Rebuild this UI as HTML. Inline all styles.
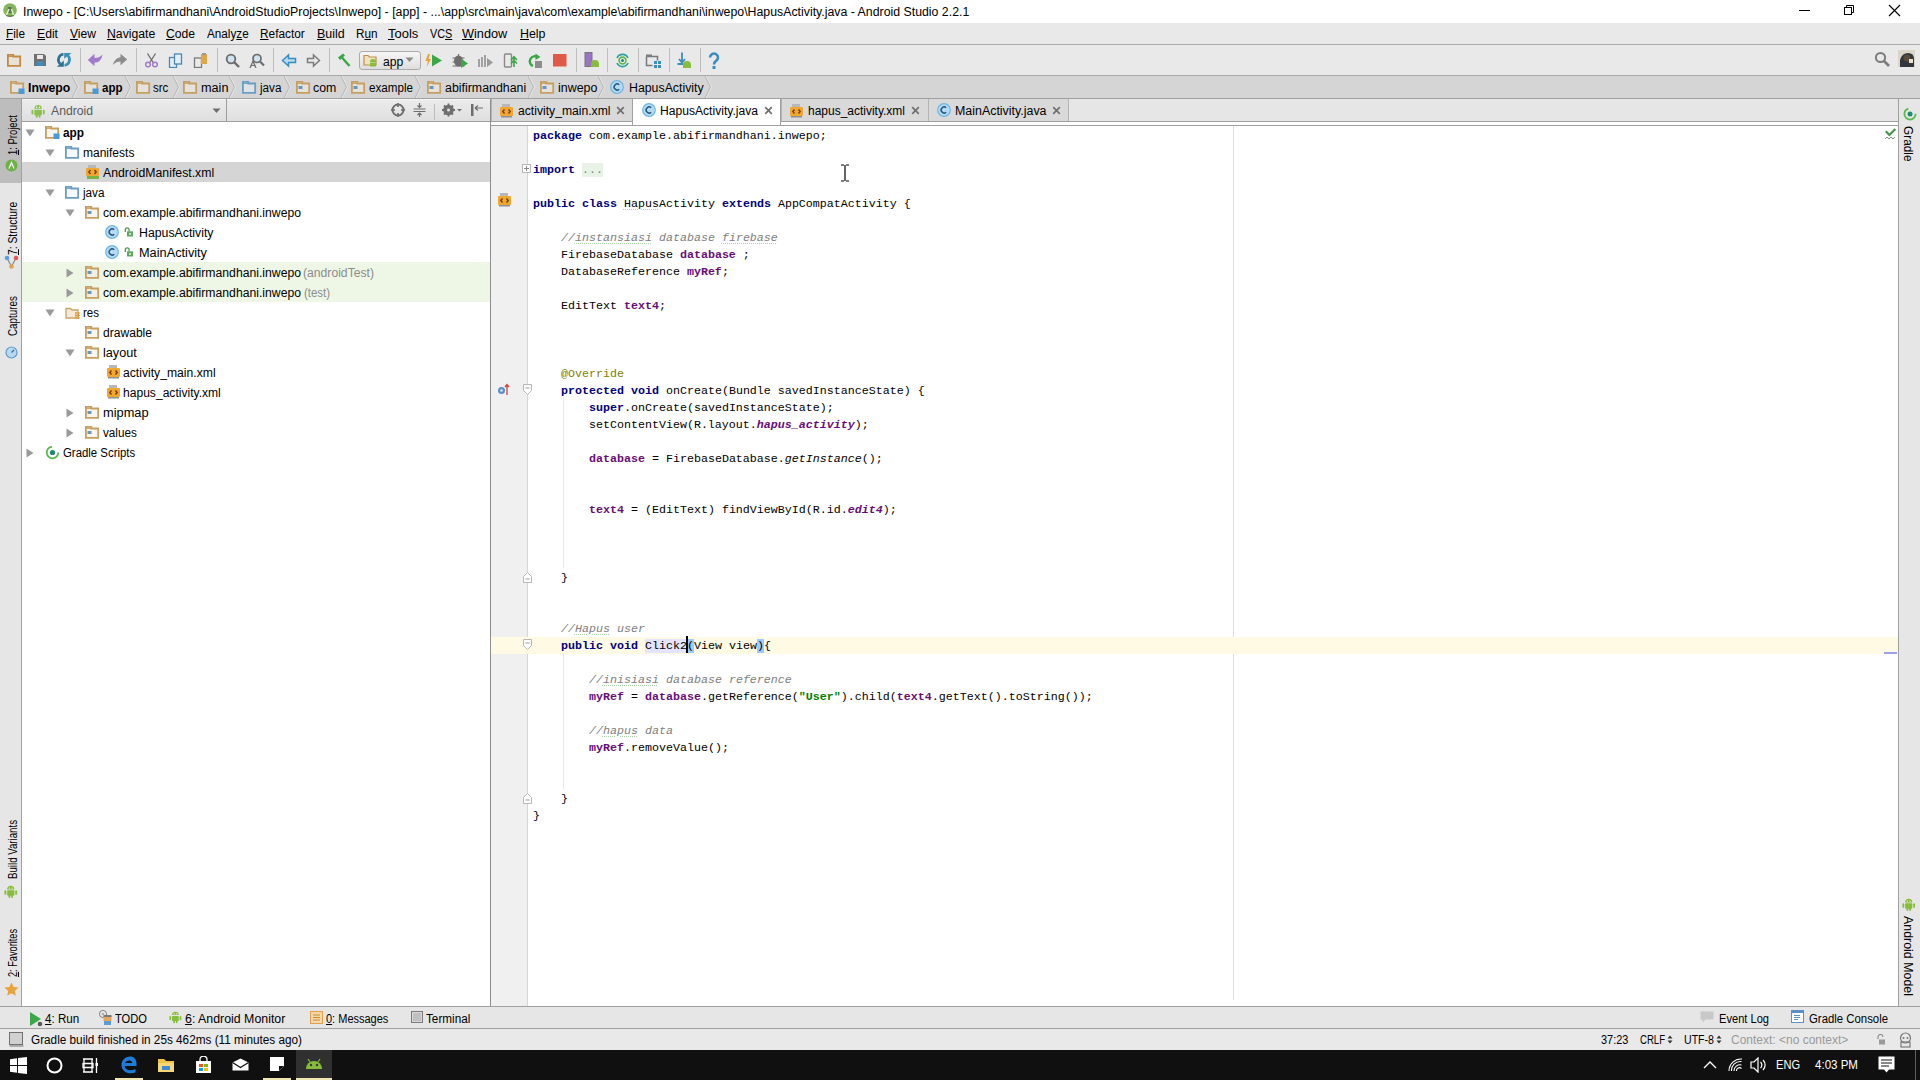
<!DOCTYPE html><html><head><meta charset="utf-8"><style>
html,body{margin:0;padding:0;width:1920px;height:1080px;overflow:hidden;background:#fff;position:relative}
u{text-decoration:underline;text-underline-offset:1px}
pre{margin:0}
.k{color:#000080;font-weight:bold}.f{color:#660e7a;font-weight:bold}.sf{color:#660e7a;font-weight:bold;font-style:italic}
.c{color:#808080;font-style:italic;font-weight:normal}.a{color:#808000}.s{color:#008000;font-weight:bold}
.sp{text-decoration:underline dotted #a8d4a8;text-underline-offset:2px}.fold{background:#e8f2e6;color:#7a8a7a}.hl{background:#e4e4ff}.br{background:#99ccff}
</style></head><body>
<div style="position:absolute;left:0px;top:0px;width:1920px;height:23px;background:#ffffff;"></div>
<div style="position:absolute;left:0px;top:23px;width:1920px;height:21px;background:#e9e9e9;"></div>
<div style="position:absolute;left:0px;top:44px;width:1920px;height:1px;background:#a9a9a9;"></div>
<div style="position:absolute;left:0px;top:45px;width:1920px;height:30px;background:#e9e9e9;"></div>
<div style="position:absolute;left:0px;top:75px;width:1920px;height:1px;background:#a9a9a9;"></div>
<div style="position:absolute;left:0px;top:76px;width:1920px;height:22px;background:#d5d5d5;"></div>
<div style="position:absolute;left:0px;top:98px;width:1920px;height:1px;background:#a0a0a0;"></div>
<div style="position:absolute;left:0px;top:99px;width:21px;height:907px;background:#e6e6e6;"></div>
<div style="position:absolute;left:21px;top:99px;width:1px;height:907px;background:#a0a0a0;"></div>
<div style="position:absolute;left:0px;top:99px;width:21px;height:84px;background:#bdbdbd;"></div>
<div style="position:absolute;left:22px;top:99px;width:468px;height:22px;background:linear-gradient(#ececec,#dfdfdf);"></div>
<div style="position:absolute;left:22px;top:121px;width:468px;height:1px;background:#a0a0a0;"></div>
<div style="position:absolute;left:22px;top:99px;width:468px;height:1px;background:#f6f6f6;"></div>
<div style="position:absolute;left:226px;top:99px;width:1px;height:22px;background:#9c9c9c;"></div>
<div style="position:absolute;left:22px;top:122px;width:468px;height:884px;background:#ffffff;"></div>
<div style="position:absolute;left:22px;top:162px;width:468px;height:20px;background:#d5d5d5;"></div>
<div style="position:absolute;left:22px;top:262px;width:468px;height:40px;background:#eef7e6;"></div>
<div style="position:absolute;left:490px;top:99px;width:1px;height:907px;background:#8e8e8e;"></div>
<div style="position:absolute;left:491px;top:99px;width:1408px;height:22px;background:#e6e6e6;"></div>
<div style="position:absolute;left:491px;top:121px;width:1408px;height:1px;background:#a0a0a0;"></div>
<div style="position:absolute;left:491px;top:122px;width:1408px;height:3px;background:#ffffff;"></div>
<div style="position:absolute;left:491px;top:125px;width:1408px;height:1px;background:#a0a0a0;"></div>
<div style="position:absolute;left:491px;top:126px;width:1408px;height:880px;background:#ffffff;"></div>
<div style="position:absolute;left:491px;top:126px;width:37px;height:880px;background:#f0f0f0;"></div>
<div style="position:absolute;left:527px;top:126px;width:1px;height:880px;background:#d6d6d6;"></div>
<div style="position:absolute;left:1233px;top:126px;width:1px;height:874px;background:#dcdcdc;"></div>
<div style="position:absolute;left:491px;top:637px;width:1408px;height:17px;background:#fffae3;"></div>
<div style="position:absolute;left:1898px;top:99px;width:1px;height:907px;background:#a0a0a0;"></div>
<div style="position:absolute;left:1899px;top:99px;width:21px;height:907px;background:#e6e6e6;"></div>
<div style="position:absolute;left:0px;top:1006px;width:1920px;height:1px;background:#a0a0a0;"></div>
<div style="position:absolute;left:0px;top:1007px;width:1920px;height:21px;background:#e6e6e6;"></div>
<div style="position:absolute;left:0px;top:1028px;width:1920px;height:1px;background:#a0a0a0;"></div>
<div style="position:absolute;left:0px;top:1029px;width:1920px;height:21px;background:#e9e9e9;"></div>
<div style="position:absolute;left:0px;top:1050px;width:1920px;height:30px;background:#101010;"></div>
<div style="position:absolute;left:491px;top:99px;width:141px;height:22px;background:#d9d9d9;border-left:1px solid #b4b4b4;box-sizing:border-box;"></div>
<div style="position:absolute;left:632px;top:98px;width:149px;height:27px;background:#ffffff;border-left:1px solid #a0a0a0;border-right:1px solid #a0a0a0;border-top:1px solid #a0a0a0;box-sizing:border-box;"></div>
<div style="position:absolute;left:781px;top:99px;width:147px;height:22px;background:#d9d9d9;border-left:1px solid #b4b4b4;box-sizing:border-box;"></div>
<div style="position:absolute;left:928px;top:99px;width:141px;height:22px;background:#d9d9d9;border-left:1px solid #b4b4b4;box-sizing:border-box;"></div>
<div style="position:absolute;left:1068px;top:99px;width:1px;height:22px;background:#b4b4b4;"></div>
<svg style="position:absolute;left:616px;top:106px;" width="9" height="9" viewBox="0 0 9 9"><path d="M1.2 1.2L7.8 7.8M7.8 1.2L1.2 7.8" stroke="#707070" stroke-width="1.7"/></svg>
<svg style="position:absolute;left:764px;top:106px;" width="9" height="9" viewBox="0 0 9 9"><path d="M1.2 1.2L7.8 7.8M7.8 1.2L1.2 7.8" stroke="#707070" stroke-width="1.7"/></svg>
<svg style="position:absolute;left:911px;top:106px;" width="9" height="9" viewBox="0 0 9 9"><path d="M1.2 1.2L7.8 7.8M7.8 1.2L1.2 7.8" stroke="#707070" stroke-width="1.7"/></svg>
<svg style="position:absolute;left:1052px;top:106px;" width="9" height="9" viewBox="0 0 9 9"><path d="M1.2 1.2L7.8 7.8M7.8 1.2L1.2 7.8" stroke="#707070" stroke-width="1.7"/></svg>
<svg style="position:absolute;left:2px;top:2px;" width="16" height="16" viewBox="0 0 16 16"><circle cx="8" cy="8" r="6.8" fill="#84b65a"/><path d="M6 5h3.5l.8 6H5.5z" fill="#5f6f55"/><path d="M4.5 13L7 7M11.5 13L9.5 7" stroke="#dff3cf" stroke-width="1.5"/><path d="M4 13.5q4 1.5 8 0" stroke="#5a7048" stroke-width="1.3" fill="none"/></svg>
<div style="position:absolute;left:1799px;top:10px;width:11px;height:1px;background:#000;"></div>
<svg style="position:absolute;left:1843px;top:4px;" width="12" height="12" viewBox="0 0 12 12"><rect x="1.5" y="3.5" width="7" height="7" fill="none" stroke="#000"/><path d="M3.5 3.5V1.5h7v7h-2" fill="none" stroke="#000"/></svg>
<svg style="position:absolute;left:1888px;top:4px;" width="13" height="13" viewBox="0 0 13 13"><path d="M1 1L12 12M12 1L1 12" stroke="#000" stroke-width="1.1"/></svg>
<svg style="position:absolute;left:7px;top:54px;" width="16" height="14" viewBox="0 0 16 14"><path d="M0.9 0.9h5.4v1.6h6.9v9.3H0.9z" fill="#e9dcc6" fill-opacity="0.55" stroke="#c48a44" stroke-width="1.8"/><path d="M0.75 2.4h5.5" stroke="#c48a44" stroke-width="1"/></svg>
<svg style="position:absolute;left:33px;top:53px;" width="14" height="14" viewBox="0 0 14 14"><path d="M1 1h10l2 2v10H1z" fill="#707070"/><rect x="4" y="2" width="6" height="4" fill="#e9e9e9"/><rect x="3.5" y="8.5" width="7" height="4.5" fill="#3d8ec0"/></svg>
<svg style="position:absolute;left:56px;top:52px;" width="16" height="16" viewBox="0 0 16 16"><path d="M7.5 2.2A5.2 5.6 0 0 0 4.2 12" stroke="#2f7190" stroke-width="2.6" fill="none"/><path d="M0.8 14.8L7.8 14.8L7.8 8.5z" fill="#2f7190"/><path d="M8.5 13.2A5.2 5.6 0 0 0 11.8 3.4" stroke="#3d8fb8" stroke-width="2.6" fill="none"/><path d="M8.2 1H15.5L8.2 6.8z" fill="#3d8fb8"/></svg>
<div style="position:absolute;left:80px;top:48px;width:1px;height:24px;background:#bdbdbd;"></div>
<div style="position:absolute;left:136px;top:48px;width:1px;height:24px;background:#bdbdbd;"></div>
<div style="position:absolute;left:217px;top:48px;width:1px;height:24px;background:#bdbdbd;"></div>
<div style="position:absolute;left:273px;top:48px;width:1px;height:24px;background:#bdbdbd;"></div>
<div style="position:absolute;left:329px;top:48px;width:1px;height:24px;background:#bdbdbd;"></div>
<div style="position:absolute;left:576px;top:48px;width:1px;height:24px;background:#bdbdbd;"></div>
<div style="position:absolute;left:607px;top:48px;width:1px;height:24px;background:#bdbdbd;"></div>
<div style="position:absolute;left:638px;top:48px;width:1px;height:24px;background:#bdbdbd;"></div>
<div style="position:absolute;left:669px;top:48px;width:1px;height:24px;background:#bdbdbd;"></div>
<div style="position:absolute;left:700px;top:48px;width:1px;height:24px;background:#bdbdbd;"></div>
<svg style="position:absolute;left:87px;top:53px;" width="16" height="14" viewBox="0 0 16 14"><path d="M0.8 7L7.5 0.8V13.2z" fill="#a27bcb"/><path d="M7 5Q12.5 5 15.5 1.5Q14.5 9.5 7 9.8z" fill="#a27bcb"/></svg>
<svg style="position:absolute;left:112px;top:53px;" width="16" height="14" viewBox="0 0 16 14"><path d="M15.2 6.5L8.5 0.8V12.2z" fill="#8c8c8c"/><path d="M9 4.3Q3 4.5 0.8 12Q4 8.6 9 8.6z" fill="#8c8c8c"/></svg>
<svg style="position:absolute;left:144px;top:53px;" width="15" height="15" viewBox="0 0 15 15"><path d="M3.5 0.5L9.5 10M11.5 0.5L5.5 10" stroke="#6c6c6c" stroke-width="1.3"/><circle cx="4" cy="11.5" r="2.3" fill="none" stroke="#a27bcb" stroke-width="1.5"/><circle cx="11" cy="11.5" r="2.3" fill="none" stroke="#a27bcb" stroke-width="1.5"/></svg>
<svg style="position:absolute;left:168px;top:53px;" width="15" height="15" viewBox="0 0 15 15"><rect x="1.5" y="4.5" width="7" height="10" fill="#e4eef6" stroke="#4b88b6" stroke-width="1.3"/><rect x="6.5" y="1" width="7" height="10" fill="#e4eef6" stroke="#4b88b6" stroke-width="1.3"/></svg>
<svg style="position:absolute;left:193px;top:53px;" width="15" height="15" viewBox="0 0 15 15"><rect x="1.5" y="5" width="7" height="9.5" fill="#eaeaea" stroke="#7a7a7a" stroke-width="1.3"/><rect x="8" y="1" width="6" height="10" fill="#e0a545"/><rect x="9" y="0" width="4" height="2" fill="#9a9a9a"/></svg>
<svg style="position:absolute;left:225px;top:53px;" width="15" height="15" viewBox="0 0 15 15"><circle cx="6" cy="6" r="4.3" fill="#cfe3f1" stroke="#6b6b6b" stroke-width="1.8"/><path d="M9 9l5 5" stroke="#6b6b6b" stroke-width="2.4"/></svg>
<svg style="position:absolute;left:249px;top:53px;" width="16" height="15" viewBox="0 0 16 15"><circle cx="8" cy="5.5" r="4" fill="#cfe3f1" stroke="#6b6b6b" stroke-width="1.7"/><path d="M11 8.5l4 4" stroke="#6b6b6b" stroke-width="2.2"/><path d="M1 15l3-7 3 7M2.2 12.5h3.6" stroke="#6b6b6b" stroke-width="1.2" fill="none"/></svg>
<svg style="position:absolute;left:281px;top:53px;" width="16" height="15" viewBox="0 0 16 15"><path d="M1.5 7.5L7.5 2v3.5h7v4h-7V13z" fill="#b6dbf3" stroke="#3a8dc0" stroke-width="1.5"/></svg>
<svg style="position:absolute;left:306px;top:53px;" width="15" height="15" viewBox="0 0 15 15"><path d="M13.5 7.5L7.5 2v3.5h-6v4h6V13z" fill="#e8e8e8" stroke="#7c7c7c" stroke-width="1.5"/></svg>
<svg style="position:absolute;left:336px;top:53px;" width="15" height="15" viewBox="0 0 15 15"><path d="M2 4.5L7 0.5l2 2L4 7z" fill="#3aa844"/><path d="M5.5 4L13.5 13" stroke="#3aa844" stroke-width="2.4"/></svg>
<div style="position:absolute;left:359px;top:51px;width:62px;height:19px;box-sizing:border-box;border:1px solid #ababab;border-radius:3px;background:linear-gradient(#f6f6f6,#dedede);"></div>
<svg style="position:absolute;left:363px;top:53px;" width="16" height="15" viewBox="0 0 16 15"><path d="M1 2.5h4l1.5 1.5h6.5v8H1z" fill="#f1e2c4" stroke="#c48f4a" stroke-width="1.2"/><path d="M7 9a3 3 0 0 1 6 0z" fill="#86bd3a"/><rect x="7" y="9.5" width="6" height="4" fill="#86bd3a"/></svg>
<svg style="position:absolute;left:405px;top:57px;" width="9" height="6" viewBox="0 0 9 6"><path d="M0.5 0.5h8l-4 4.5z" fill="#8a8a8a"/></svg>
<svg style="position:absolute;left:425px;top:53px;" width="19" height="15" viewBox="0 0 19 15"><path d="M3 1L0.5 8H3L1.5 14L6 6H3.5L5 1z" fill="#f0a030"/><path d="M7 1.5L17 7.5L7 13.5z" fill="#3aa844"/></svg>
<svg style="position:absolute;left:452px;top:53px;" width="17" height="15" viewBox="0 0 17 15"><ellipse cx="6.5" cy="8" rx="4.5" ry="5.5" fill="#6e6e6e"/><path d="M0.5 5h12M0.5 9h12M0.5 13h12M6.5 1v3" stroke="#6e6e6e" stroke-width="1.2"/><path d="M9 5.5l7 5l-7 4.5z" fill="#3aa844"/></svg>
<svg style="position:absolute;left:478px;top:53px;" width="16" height="15" viewBox="0 0 16 15"><path d="M1 6v8M4 4v10M7 2v12" stroke="#9a9a9a" stroke-width="1.8"/><path d="M9 5l6 4.5l-6 4.5z" fill="#9a9a9a"/></svg>
<svg style="position:absolute;left:503px;top:53px;" width="15" height="15" viewBox="0 0 15 15"><rect x="1.5" y="1" width="7" height="13" rx="1" fill="none" stroke="#8a8a8a" stroke-width="1.4"/><path d="M11 3v11M8 7l3-3 3 3M8 10.5l3-3 3 3" stroke="#3aa844" stroke-width="1.6" fill="none"/></svg>
<svg style="position:absolute;left:527px;top:53px;" width="17" height="15" viewBox="0 0 17 15"><path d="M11 4.5A5 5 0 1 0 6 13" stroke="#3aa844" stroke-width="2.4" fill="none"/><path d="M8.5 0.5l5 3.5-5 3z" fill="#3aa844"/><rect x="8" y="8" width="7" height="7" fill="#8c8c8c"/></svg>
<svg style="position:absolute;left:553px;top:54px;" width="14" height="13" viewBox="0 0 14 13"><rect x="0" y="0" width="13.5" height="12.5" fill="#e05a4a"/></svg>
<svg style="position:absolute;left:584px;top:52px;" width="16" height="17" viewBox="0 0 16 17"><rect x="1" y="0.5" width="7" height="14" fill="#9a74c6" stroke="#777" stroke-width="1"/><path d="M7 12a4 4 0 0 1 8 0z" fill="#86bd3a"/><rect x="7" y="12" width="8" height="3" fill="#86bd3a"/></svg>
<svg style="position:absolute;left:615px;top:53px;" width="15" height="15" viewBox="0 0 15 15"><path d="M2 5A6 6 0 0 1 13 5M13 10A6 6 0 0 1 2 10" stroke="#2aa0a0" stroke-width="1.6" fill="none"/><circle cx="7.5" cy="7.5" r="3.4" fill="none" stroke="#5ab94b" stroke-width="1.6"/><circle cx="7.5" cy="7.5" r="1.5" fill="#1f8a6f"/></svg>
<svg style="position:absolute;left:645px;top:53px;" width="17" height="15" viewBox="0 0 17 15"><path d="M1.5 3.5h11v4M1.5 3.5v9h6" stroke="#7a7a7a" stroke-width="1.5" fill="none"/><rect x="1" y="1.5" width="6" height="2" fill="#7a7a7a"/><rect x="9" y="8" width="3" height="3" fill="#3a8dc0"/><rect x="13" y="8" width="3" height="3" fill="#3a8dc0"/><rect x="9" y="12" width="3" height="3" fill="#3a8dc0"/><rect x="13" y="12" width="3" height="3" fill="#3a8dc0"/></svg>
<svg style="position:absolute;left:677px;top:52px;" width="15" height="17" viewBox="0 0 15 17"><path d="M5 0.5v9M2 7l3 3.5 3-3.5" stroke="#3a8dc0" stroke-width="1.8" fill="none"/><rect x="0.5" y="11" width="6" height="2" fill="#3a8dc0"/><path d="M6 13a4 4 0 0 1 8 0z" fill="#86bd3a"/><rect x="6" y="13" width="8" height="3" fill="#86bd3a"/></svg>
<svg style="position:absolute;left:707px;top:52px;" width="14" height="17" viewBox="0 0 14 17"><path d="M3 5.5a4 4 0 1 1 6 3.5c-1.8 1-2 1.7-2 3.5" stroke="#3a8dc0" stroke-width="2.6" fill="none"/><rect x="5.5" y="14" width="3" height="3" fill="#3a8dc0"/></svg>
<svg style="position:absolute;left:1874px;top:51px;" width="17" height="17" viewBox="0 0 17 17"><circle cx="6.5" cy="6.5" r="4.6" fill="none" stroke="#7c7c7c" stroke-width="2"/><path d="M10 10l5 5" stroke="#7c7c7c" stroke-width="2.6"/></svg>
<svg style="position:absolute;left:1898px;top:50px;" width="17" height="17" viewBox="0 0 17 17"><rect x="0" y="0" width="17" height="17" fill="#dcd6c8"/><path d="M2 17V10q2-7 8-7t6 6v8z" fill="#2f3640"/><circle cx="9" cy="8" r="3.5" fill="#5a4a3a"/><rect x="11" y="9" width="4" height="4" fill="#e8e0d0"/></svg>
<svg style="position:absolute;left:10px;top:81px;" width="16" height="14" viewBox="0 0 16 14"><path d="M0.9 0.9h5.4v1.6h6.9v9.3H0.9z" fill="#f2ece2" fill-opacity="0.55" stroke="#c6a062" stroke-width="1.8"/><path d="M0.75 2.4h5.5" stroke="#c6a062" stroke-width="1"/><rect x="8.5" y="7.5" width="6" height="5.5" fill="#4a9ad6"/></svg>
<svg style="position:absolute;left:84px;top:81px;" width="16" height="14" viewBox="0 0 16 14"><path d="M0.9 0.9h5.4v1.6h6.9v9.3H0.9z" fill="#f2ece2" fill-opacity="0.55" stroke="#c6a062" stroke-width="1.8"/><path d="M0.75 2.4h5.5" stroke="#c6a062" stroke-width="1"/><rect x="8.5" y="7.5" width="6" height="5.5" fill="#4a9ad6"/></svg>
<svg style="position:absolute;left:136px;top:81px;" width="16" height="14" viewBox="0 0 16 14"><path d="M0.9 0.9h5.4v1.6h6.9v9.3H0.9z" fill="#f2ece2" fill-opacity="0.55" stroke="#c6a062" stroke-width="1.8"/><path d="M0.75 2.4h5.5" stroke="#c6a062" stroke-width="1"/></svg>
<svg style="position:absolute;left:183px;top:81px;" width="16" height="14" viewBox="0 0 16 14"><path d="M0.9 0.9h5.4v1.6h6.9v9.3H0.9z" fill="#f2ece2" fill-opacity="0.55" stroke="#c6a062" stroke-width="1.8"/><path d="M0.75 2.4h5.5" stroke="#c6a062" stroke-width="1"/></svg>
<svg style="position:absolute;left:242px;top:81px;" width="16" height="14" viewBox="0 0 16 14"><path d="M0.9 0.9h5.4v1.6h6.9v9.3H0.9z" fill="#e6eef4" fill-opacity="0.55" stroke="#6a9ec4" stroke-width="1.8"/><path d="M0.75 2.4h5.5" stroke="#6a9ec4" stroke-width="1"/></svg>
<svg style="position:absolute;left:296px;top:81px;" width="16" height="14" viewBox="0 0 16 14"><path d="M0.9 0.9h5.4v1.6h6.9v9.3H0.9z" fill="#f2ece2" fill-opacity="0.55" stroke="#c6a062" stroke-width="1.8"/><path d="M0.75 2.4h5.5" stroke="#c6a062" stroke-width="1"/><rect x="2.5" y="5" width="4" height="3" fill="#6a96b8"/></svg>
<svg style="position:absolute;left:351px;top:81px;" width="16" height="14" viewBox="0 0 16 14"><path d="M0.9 0.9h5.4v1.6h6.9v9.3H0.9z" fill="#f2ece2" fill-opacity="0.55" stroke="#c6a062" stroke-width="1.8"/><path d="M0.75 2.4h5.5" stroke="#c6a062" stroke-width="1"/><rect x="2.5" y="5" width="4" height="3" fill="#6a96b8"/></svg>
<svg style="position:absolute;left:427px;top:81px;" width="16" height="14" viewBox="0 0 16 14"><path d="M0.9 0.9h5.4v1.6h6.9v9.3H0.9z" fill="#f2ece2" fill-opacity="0.55" stroke="#c6a062" stroke-width="1.8"/><path d="M0.75 2.4h5.5" stroke="#c6a062" stroke-width="1"/><rect x="2.5" y="5" width="4" height="3" fill="#6a96b8"/></svg>
<svg style="position:absolute;left:540px;top:81px;" width="16" height="14" viewBox="0 0 16 14"><path d="M0.9 0.9h5.4v1.6h6.9v9.3H0.9z" fill="#f2ece2" fill-opacity="0.55" stroke="#c6a062" stroke-width="1.8"/><path d="M0.75 2.4h5.5" stroke="#c6a062" stroke-width="1"/><rect x="2.5" y="5" width="4" height="3" fill="#6a96b8"/></svg>
<svg style="position:absolute;left:610px;top:80px;" width="14" height="14" viewBox="0 0 14 14"><circle cx="7" cy="7" r="6.3" fill="#b2dcf6" stroke="#6fb5e2" stroke-width="1.2"/><path d="M9.2 4.8A3 3 0 1 0 9.2 9.2" stroke="#24527a" stroke-width="1.4" fill="none"/></svg>
<svg style="position:absolute;left:71px;top:76px;" width="9" height="22" viewBox="0 0 9 22"><path d="M1 0L6.5 11L1 22" stroke="#bcbcbc" stroke-width="1.2" fill="none"/><path d="M2.2 0L7.7 11L2.2 22" stroke="#e4e4e4" stroke-width="1" fill="none"/></svg>
<svg style="position:absolute;left:124px;top:76px;" width="9" height="22" viewBox="0 0 9 22"><path d="M1 0L6.5 11L1 22" stroke="#bcbcbc" stroke-width="1.2" fill="none"/><path d="M2.2 0L7.7 11L2.2 22" stroke="#e4e4e4" stroke-width="1" fill="none"/></svg>
<svg style="position:absolute;left:172px;top:76px;" width="9" height="22" viewBox="0 0 9 22"><path d="M1 0L6.5 11L1 22" stroke="#bcbcbc" stroke-width="1.2" fill="none"/><path d="M2.2 0L7.7 11L2.2 22" stroke="#e4e4e4" stroke-width="1" fill="none"/></svg>
<svg style="position:absolute;left:228px;top:76px;" width="9" height="22" viewBox="0 0 9 22"><path d="M1 0L6.5 11L1 22" stroke="#bcbcbc" stroke-width="1.2" fill="none"/><path d="M2.2 0L7.7 11L2.2 22" stroke="#e4e4e4" stroke-width="1" fill="none"/></svg>
<svg style="position:absolute;left:283px;top:76px;" width="9" height="22" viewBox="0 0 9 22"><path d="M1 0L6.5 11L1 22" stroke="#bcbcbc" stroke-width="1.2" fill="none"/><path d="M2.2 0L7.7 11L2.2 22" stroke="#e4e4e4" stroke-width="1" fill="none"/></svg>
<svg style="position:absolute;left:340px;top:76px;" width="9" height="22" viewBox="0 0 9 22"><path d="M1 0L6.5 11L1 22" stroke="#bcbcbc" stroke-width="1.2" fill="none"/><path d="M2.2 0L7.7 11L2.2 22" stroke="#e4e4e4" stroke-width="1" fill="none"/></svg>
<svg style="position:absolute;left:414px;top:76px;" width="9" height="22" viewBox="0 0 9 22"><path d="M1 0L6.5 11L1 22" stroke="#bcbcbc" stroke-width="1.2" fill="none"/><path d="M2.2 0L7.7 11L2.2 22" stroke="#e4e4e4" stroke-width="1" fill="none"/></svg>
<svg style="position:absolute;left:527px;top:76px;" width="9" height="22" viewBox="0 0 9 22"><path d="M1 0L6.5 11L1 22" stroke="#bcbcbc" stroke-width="1.2" fill="none"/><path d="M2.2 0L7.7 11L2.2 22" stroke="#e4e4e4" stroke-width="1" fill="none"/></svg>
<svg style="position:absolute;left:597px;top:76px;" width="9" height="22" viewBox="0 0 9 22"><path d="M1 0L6.5 11L1 22" stroke="#bcbcbc" stroke-width="1.2" fill="none"/><path d="M2.2 0L7.7 11L2.2 22" stroke="#e4e4e4" stroke-width="1" fill="none"/></svg>
<svg style="position:absolute;left:704px;top:76px;" width="9" height="22" viewBox="0 0 9 22"><path d="M1 0L6.5 11L1 22" stroke="#bcbcbc" stroke-width="1.2" fill="none"/><path d="M2.2 0L7.7 11L2.2 22" stroke="#e4e4e4" stroke-width="1" fill="none"/></svg>
<svg style="position:absolute;left:499px;top:103px;" width="15" height="15" viewBox="0 0 15 15"><rect x="3" y="1" width="8" height="3" fill="#b8b8b8"/><rect x="1" y="4" width="13" height="9" rx="1" fill="#f0a732"/><path d="M5.5 6.5L3.8 8.5L5.5 10.5M9.5 6.5L11.2 8.5L9.5 10.5" stroke="#7a3d00" stroke-width="1.4" fill="none"/><rect x="2" y="13" width="11" height="1.5" fill="#909090"/></svg>
<svg style="position:absolute;left:642px;top:103px;" width="14" height="14" viewBox="0 0 14 14"><circle cx="7" cy="7" r="6.3" fill="#b2dcf6" stroke="#6fb5e2" stroke-width="1.2"/><path d="M9.2 4.8A3 3 0 1 0 9.2 9.2" stroke="#24527a" stroke-width="1.4" fill="none"/></svg>
<svg style="position:absolute;left:789px;top:103px;" width="15" height="15" viewBox="0 0 15 15"><rect x="3" y="1" width="8" height="3" fill="#b8b8b8"/><rect x="1" y="4" width="13" height="9" rx="1" fill="#f0a732"/><path d="M5.5 6.5L3.8 8.5L5.5 10.5M9.5 6.5L11.2 8.5L9.5 10.5" stroke="#7a3d00" stroke-width="1.4" fill="none"/><rect x="2" y="13" width="11" height="1.5" fill="#909090"/></svg>
<svg style="position:absolute;left:937px;top:103px;" width="14" height="14" viewBox="0 0 14 14"><circle cx="7" cy="7" r="6.3" fill="#b2dcf6" stroke="#6fb5e2" stroke-width="1.2"/><path d="M9.2 4.8A3 3 0 1 0 9.2 9.2" stroke="#24527a" stroke-width="1.4" fill="none"/></svg>
<svg style="position:absolute;left:31px;top:103px;" width="15" height="16" viewBox="0 0 15 16"><g transform="scale(0.95)"><path d="M3.5 6a4 4 0 0 1 8 0z" fill="#8cc152"/><rect x="3.5" y="7" width="8" height="6" rx="1" fill="#8cc152"/><rect x="0.5" y="7" width="2" height="5" rx="1" fill="#8cc152"/><rect x="12.5" y="7" width="2" height="5" rx="1" fill="#8cc152"/><rect x="5" y="12" width="2" height="3.5" rx="1" fill="#8cc152"/><rect x="8" y="12" width="2" height="3.5" rx="1" fill="#8cc152"/><circle cx="6" cy="4.5" r=".7" fill="#fff"/><circle cx="9" cy="4.5" r=".7" fill="#fff"/></g></svg>
<svg style="position:absolute;left:212px;top:108px;" width="9" height="6" viewBox="0 0 9 6"><path d="M0.5 0.5h8l-4 4.5z" fill="#6e6e6e"/></svg>
<svg style="position:absolute;left:391px;top:103px;" width="14" height="14" viewBox="0 0 14 14"><circle cx="7" cy="7" r="5.5" fill="none" stroke="#6e6e6e" stroke-width="2"/><path d="M7 0v4M7 10v4M0 7h4M10 7h4" stroke="#6e6e6e" stroke-width="1.6"/></svg>
<svg style="position:absolute;left:413px;top:103px;" width="13" height="14" viewBox="0 0 13 14"><path d="M0.5 6h12M0.5 8.5h12M6.5 0v4.5M6.5 10v4M4.5 2.5l2 2 2-2M4.5 12l2-2 2 2" stroke="#6e6e6e" stroke-width="1.2" fill="none"/></svg>
<div style="position:absolute;left:434px;top:104px;width:1px;height:16px;background:#bdbdbd;"></div>
<svg style="position:absolute;left:442px;top:103px;" width="20" height="14" viewBox="0 0 20 14"><circle cx="6.5" cy="7" r="4" fill="none" stroke="#6e6e6e" stroke-width="2.6"/><path d="M6.5 0.5v13M0 7h13M2 2.5l9 9M11 2.5l-9 9" stroke="#6e6e6e" stroke-width="1.8"/><circle cx="6.5" cy="7" r="1.5" fill="#e6e6e6"/><path d="M15 6h5l-2.5 2.5z" fill="#6e6e6e"/></svg>
<svg style="position:absolute;left:470px;top:103px;" width="14" height="14" viewBox="0 0 14 14"><rect x="1" y="1" width="2.5" height="12" fill="#6e6e6e"/><path d="M5 5h8M5 5l3-2.5M5 5l3 2.5" stroke="#6e6e6e" stroke-width="1.2" fill="none"/></svg>
<svg style="position:absolute;left:25px;top:129px;" width="10" height="8" viewBox="0 0 10 8"><path d="M0.5 0.5h9l-4.5 7z" fill="#9a9a9a"/></svg>
<svg style="position:absolute;left:45px;top:126px;" width="16" height="14" viewBox="0 0 16 14"><path d="M0.9 0.9h5.4v1.6h6.9v9.3H0.9z" fill="#f2ece2" fill-opacity="0.55" stroke="#c6a062" stroke-width="1.8"/><path d="M0.75 2.4h5.5" stroke="#c6a062" stroke-width="1"/><rect x="8.5" y="7.5" width="6" height="5.5" fill="#4a9ad6"/></svg>
<svg style="position:absolute;left:45px;top:149px;" width="10" height="8" viewBox="0 0 10 8"><path d="M0.5 0.5h9l-4.5 7z" fill="#9a9a9a"/></svg>
<svg style="position:absolute;left:65px;top:146px;" width="16" height="14" viewBox="0 0 16 14"><path d="M0.9 0.9h5.4v1.6h6.9v9.3H0.9z" fill="#eef3f6" fill-opacity="0.55" stroke="#6a9ec4" stroke-width="1.8"/><path d="M0.75 2.4h5.5" stroke="#6a9ec4" stroke-width="1"/></svg>
<svg style="position:absolute;left:85px;top:164px;" width="16" height="16" viewBox="0 0 16 16"><rect x="3" y="1" width="8" height="3" fill="#b8b8b8"/><rect x="1" y="4" width="13" height="8" rx="1" fill="#f0a732"/><path d="M5.5 6L3.8 8L5.5 10M9.5 6L11.2 8L9.5 10" stroke="#7a3d00" stroke-width="1.4" fill="none"/><rect x="2" y="12" width="12" height="3" fill="#7cb342"/></svg>
<svg style="position:absolute;left:45px;top:189px;" width="10" height="8" viewBox="0 0 10 8"><path d="M0.5 0.5h9l-4.5 7z" fill="#9a9a9a"/></svg>
<svg style="position:absolute;left:65px;top:186px;" width="16" height="14" viewBox="0 0 16 14"><path d="M0.9 0.9h5.4v1.6h6.9v9.3H0.9z" fill="#eef3f6" fill-opacity="0.55" stroke="#6a9ec4" stroke-width="1.8"/><path d="M0.75 2.4h5.5" stroke="#6a9ec4" stroke-width="1"/></svg>
<svg style="position:absolute;left:65px;top:209px;" width="10" height="8" viewBox="0 0 10 8"><path d="M0.5 0.5h9l-4.5 7z" fill="#9a9a9a"/></svg>
<svg style="position:absolute;left:85px;top:206px;" width="16" height="14" viewBox="0 0 16 14"><path d="M0.9 0.9h5.4v1.6h6.9v9.3H0.9z" fill="#f2ece2" fill-opacity="0.55" stroke="#c6a062" stroke-width="1.8"/><path d="M0.75 2.4h5.5" stroke="#c6a062" stroke-width="1"/><rect x="2.5" y="5" width="4" height="3" fill="#6a96b8"/></svg>
<svg style="position:absolute;left:105px;top:225px;" width="14" height="14" viewBox="0 0 14 14"><circle cx="7" cy="7" r="6.3" fill="#b2dcf6" stroke="#6fb5e2" stroke-width="1.2"/><path d="M9.2 4.8A3 3 0 1 0 9.2 9.2" stroke="#24527a" stroke-width="1.4" fill="none"/></svg>
<svg style="position:absolute;left:124px;top:227px;" width="10" height="10" viewBox="0 0 10 10"><path d="M1.3 5V2.8a1.9 1.9 0 0 1 3.8 0V4.5" stroke="#4f9a4f" stroke-width="1.3" fill="none"/><rect x="3" y="4.3" width="6" height="5.2" fill="#5fa85f"/><rect x="5.3" y="6" width="1.5" height="2" fill="#e8f4e8"/></svg>
<svg style="position:absolute;left:105px;top:245px;" width="14" height="14" viewBox="0 0 14 14"><circle cx="7" cy="7" r="6.3" fill="#b2dcf6" stroke="#6fb5e2" stroke-width="1.2"/><path d="M9.2 4.8A3 3 0 1 0 9.2 9.2" stroke="#24527a" stroke-width="1.4" fill="none"/></svg>
<svg style="position:absolute;left:124px;top:247px;" width="10" height="10" viewBox="0 0 10 10"><path d="M1.3 5V2.8a1.9 1.9 0 0 1 3.8 0V4.5" stroke="#4f9a4f" stroke-width="1.3" fill="none"/><rect x="3" y="4.3" width="6" height="5.2" fill="#5fa85f"/><rect x="5.3" y="6" width="1.5" height="2" fill="#e8f4e8"/></svg>
<svg style="position:absolute;left:66px;top:268px;" width="8" height="10" viewBox="0 0 8 10"><path d="M0.5 0.5v9l7-4.5z" fill="#9a9a9a"/></svg>
<svg style="position:absolute;left:85px;top:266px;" width="16" height="14" viewBox="0 0 16 14"><path d="M0.9 0.9h5.4v1.6h6.9v9.3H0.9z" fill="#f2ece2" fill-opacity="0.55" stroke="#c6a062" stroke-width="1.8"/><path d="M0.75 2.4h5.5" stroke="#c6a062" stroke-width="1"/><rect x="2.5" y="5" width="4" height="3" fill="#6a96b8"/></svg>
<svg style="position:absolute;left:66px;top:288px;" width="8" height="10" viewBox="0 0 8 10"><path d="M0.5 0.5v9l7-4.5z" fill="#9a9a9a"/></svg>
<svg style="position:absolute;left:85px;top:286px;" width="16" height="14" viewBox="0 0 16 14"><path d="M0.9 0.9h5.4v1.6h6.9v9.3H0.9z" fill="#f2ece2" fill-opacity="0.55" stroke="#c6a062" stroke-width="1.8"/><path d="M0.75 2.4h5.5" stroke="#c6a062" stroke-width="1"/><rect x="2.5" y="5" width="4" height="3" fill="#6a96b8"/></svg>
<svg style="position:absolute;left:45px;top:309px;" width="10" height="8" viewBox="0 0 10 8"><path d="M0.5 0.5h9l-4.5 7z" fill="#9a9a9a"/></svg>
<svg style="position:absolute;left:65px;top:306px;" width="16" height="14" viewBox="0 0 16 14"><path d="M1 2.5h4.5l1.5 1.5h6v8h-12z" fill="#f4ead8" stroke="#c9a46a" stroke-width="1.3"/><path d="M10 7h5M10 9.5h5M10 12h5M11 6v7M13.5 6v7" stroke="#e0a040" stroke-width="1.2"/></svg>
<svg style="position:absolute;left:85px;top:326px;" width="16" height="14" viewBox="0 0 16 14"><path d="M0.9 0.9h5.4v1.6h6.9v9.3H0.9z" fill="#f2ece2" fill-opacity="0.55" stroke="#c6a062" stroke-width="1.8"/><path d="M0.75 2.4h5.5" stroke="#c6a062" stroke-width="1"/><rect x="2.5" y="5" width="4" height="3" fill="#6a96b8"/></svg>
<svg style="position:absolute;left:65px;top:349px;" width="10" height="8" viewBox="0 0 10 8"><path d="M0.5 0.5h9l-4.5 7z" fill="#9a9a9a"/></svg>
<svg style="position:absolute;left:85px;top:346px;" width="16" height="14" viewBox="0 0 16 14"><path d="M0.9 0.9h5.4v1.6h6.9v9.3H0.9z" fill="#f2ece2" fill-opacity="0.55" stroke="#c6a062" stroke-width="1.8"/><path d="M0.75 2.4h5.5" stroke="#c6a062" stroke-width="1"/><rect x="2.5" y="5" width="4" height="3" fill="#6a96b8"/></svg>
<svg style="position:absolute;left:106px;top:364px;" width="15" height="15" viewBox="0 0 15 15"><rect x="3" y="1" width="8" height="3" fill="#b8b8b8"/><rect x="1" y="4" width="13" height="9" rx="1" fill="#f0a732"/><path d="M5.5 6.5L3.8 8.5L5.5 10.5M9.5 6.5L11.2 8.5L9.5 10.5" stroke="#7a3d00" stroke-width="1.4" fill="none"/><rect x="2" y="13" width="11" height="1.5" fill="#909090"/></svg>
<svg style="position:absolute;left:106px;top:384px;" width="15" height="15" viewBox="0 0 15 15"><rect x="3" y="1" width="8" height="3" fill="#b8b8b8"/><rect x="1" y="4" width="13" height="9" rx="1" fill="#f0a732"/><path d="M5.5 6.5L3.8 8.5L5.5 10.5M9.5 6.5L11.2 8.5L9.5 10.5" stroke="#7a3d00" stroke-width="1.4" fill="none"/><rect x="2" y="13" width="11" height="1.5" fill="#909090"/></svg>
<svg style="position:absolute;left:66px;top:408px;" width="8" height="10" viewBox="0 0 8 10"><path d="M0.5 0.5v9l7-4.5z" fill="#9a9a9a"/></svg>
<svg style="position:absolute;left:85px;top:406px;" width="16" height="14" viewBox="0 0 16 14"><path d="M0.9 0.9h5.4v1.6h6.9v9.3H0.9z" fill="#f2ece2" fill-opacity="0.55" stroke="#c6a062" stroke-width="1.8"/><path d="M0.75 2.4h5.5" stroke="#c6a062" stroke-width="1"/><rect x="2.5" y="5" width="4" height="3" fill="#6a96b8"/></svg>
<svg style="position:absolute;left:66px;top:428px;" width="8" height="10" viewBox="0 0 8 10"><path d="M0.5 0.5v9l7-4.5z" fill="#9a9a9a"/></svg>
<svg style="position:absolute;left:85px;top:426px;" width="16" height="14" viewBox="0 0 16 14"><path d="M0.9 0.9h5.4v1.6h6.9v9.3H0.9z" fill="#f2ece2" fill-opacity="0.55" stroke="#c6a062" stroke-width="1.8"/><path d="M0.75 2.4h5.5" stroke="#c6a062" stroke-width="1"/><rect x="2.5" y="5" width="4" height="3" fill="#6a96b8"/></svg>
<svg style="position:absolute;left:26px;top:448px;" width="8" height="10" viewBox="0 0 8 10"><path d="M0.5 0.5v9l7-4.5z" fill="#9a9a9a"/></svg>
<svg style="position:absolute;left:45px;top:445px;" width="15" height="15" viewBox="0 0 15 15"><circle cx="7.5" cy="7.5" r="5.8" fill="none" stroke="#5ab94b" stroke-width="1.8" stroke-dasharray="26 10"/><circle cx="7.5" cy="7.5" r="2.6" fill="#1f8a6f"/></svg>
<svg style="position:absolute;left:5px;top:159px;" width="13" height="13" viewBox="0 0 13 13"><circle cx="6.5" cy="6.5" r="6" fill="#6ab344"/><path d="M4 9.5l2.5-6 2.5 6" stroke="#fff" stroke-width="1.2" fill="none"/></svg>
<svg style="position:absolute;left:4px;top:255px;" width="15" height="15" viewBox="0 0 15 15"><path d="M3 3L7.5 11.5L12 3" stroke="#888" stroke-width="1.2" fill="none"/><circle cx="3" cy="3" r="2.3" fill="#5aa0e0"/><circle cx="12" cy="3" r="2.3" fill="#e05a5a"/><circle cx="7.5" cy="11.5" r="2.3" fill="#e0a050"/></svg>
<svg style="position:absolute;left:5px;top:345px;" width="13" height="14" viewBox="0 0 13 14"><circle cx="6.5" cy="7.5" r="5.5" fill="#b8d8f0" stroke="#5a9ad0" stroke-width="1.2"/><path d="M6.5 7.5l2.5-2.5" stroke="#3a6a9a" stroke-width="1.2"/></svg>
<svg style="position:absolute;left:4px;top:884px;" width="14" height="15" viewBox="0 0 14 15"><g transform="scale(0.9)"><path d="M3.5 6a4 4 0 0 1 8 0z" fill="#86bd3a"/><rect x="3.5" y="7" width="8" height="6" rx="1" fill="#86bd3a"/><rect x="0.5" y="7" width="2" height="5" rx="1" fill="#86bd3a"/><rect x="12.5" y="7" width="2" height="5" rx="1" fill="#86bd3a"/><rect x="5" y="12" width="2" height="3.5" rx="1" fill="#86bd3a"/><rect x="8" y="12" width="2" height="3.5" rx="1" fill="#86bd3a"/><circle cx="6" cy="4.5" r=".7" fill="#fff"/><circle cx="9" cy="4.5" r=".7" fill="#fff"/></g></svg>
<svg style="position:absolute;left:4px;top:982px;" width="15" height="15" viewBox="0 0 15 15"><path d="M7.5 0.5l2.1 4.6 5 .5-3.8 3.3 1.1 4.9-4.4-2.6-4.4 2.6 1.1-4.9L.4 5.6l5-.5z" fill="#e8a33a"/></svg>
<svg style="position:absolute;left:1903px;top:107px;" width="14" height="14" viewBox="0 0 14 14"><circle cx="7" cy="7" r="5.6" fill="none" stroke="#5ab94b" stroke-width="1.8" stroke-dasharray="24 10"/><circle cx="7" cy="7" r="2.5" fill="#1f8a6f"/></svg>
<svg style="position:absolute;left:1902px;top:897px;" width="14" height="15" viewBox="0 0 14 15"><g transform="scale(0.9)"><path d="M3.5 6a4 4 0 0 1 8 0z" fill="#86bd3a"/><rect x="3.5" y="7" width="8" height="6" rx="1" fill="#86bd3a"/><rect x="0.5" y="7" width="2" height="5" rx="1" fill="#86bd3a"/><rect x="12.5" y="7" width="2" height="5" rx="1" fill="#86bd3a"/><rect x="5" y="12" width="2" height="3.5" rx="1" fill="#86bd3a"/><rect x="8" y="12" width="2" height="3.5" rx="1" fill="#86bd3a"/><circle cx="6" cy="4.5" r=".7" fill="#fff"/><circle cx="9" cy="4.5" r=".7" fill="#fff"/></g></svg>
<svg style="position:absolute;left:1884px;top:127px;" width="13" height="14" viewBox="0 0 13 14"><path d="M1.8 4.2l3.6 3.8 6-6" stroke="#4a944a" stroke-width="2.2" fill="none"/><path d="M1 12l2-2 2 2 2-2 2 2 2-2" stroke="#7a927a" stroke-width="1" fill="none"/></svg>
<div style="position:absolute;left:1884px;top:652px;width:13px;height:2px;background:#a0a0e8;"></div>
<svg style="position:absolute;left:497px;top:193px;" width="15" height="15" viewBox="0 0 15 15"><rect x="3" y="0" width="8" height="3" fill="#b8b8b8"/><rect x="1" y="3" width="13" height="9" rx="1" fill="#f0a732"/><path d="M5.5 5.5L3.8 7.5L5.5 9.5M9.5 5.5L11.2 7.5L9.5 9.5" stroke="#7a3d00" stroke-width="1.4" fill="none"/><rect x="2" y="12" width="11" height="1.5" fill="#909090"/></svg>
<svg style="position:absolute;left:497px;top:382px;" width="14" height="14" viewBox="0 0 14 14"><circle cx="4.5" cy="8.5" r="3.5" fill="#5a8fc8"/><circle cx="4.5" cy="8.5" r="1.3" fill="#d8e8f8"/><path d="M10 13V3M8 5l2-2.5 2 2.5" stroke="#d0453a" stroke-width="1.3" fill="none"/></svg>
<svg style="position:absolute;left:522px;top:164px;" width="10" height="10" viewBox="0 0 10 10"><rect x="0.5" y="0.5" width="8" height="8" fill="#fff" stroke="#b8b8b8"/><path d="M2 4.5h5M4.5 2v5" stroke="#888"/></svg>
<svg style="position:absolute;left:522px;top:384px;" width="11" height="12" viewBox="0 0 11 12"><path d="M1.5 0.5h8v6l-4 4-4-4z" fill="#fff" stroke="#b8b8b8"/><path d="M3.5 4h4" stroke="#999"/></svg>
<svg style="position:absolute;left:522px;top:571px;" width="11" height="12" viewBox="0 0 11 12"><path d="M1.5 11.5v-6l4-4 4 4v6z" fill="#fff" stroke="#b8b8b8"/><path d="M3.5 8h4" stroke="#999"/></svg>
<svg style="position:absolute;left:522px;top:639px;" width="11" height="12" viewBox="0 0 11 12"><path d="M1.5 0.5h8v6l-4 4-4-4z" fill="#fff" stroke="#b8b8b8"/><path d="M3.5 4h4" stroke="#999"/></svg>
<svg style="position:absolute;left:522px;top:792px;" width="11" height="12" viewBox="0 0 11 12"><path d="M1.5 11.5v-6l4-4 4 4v6z" fill="#fff" stroke="#b8b8b8"/><path d="M3.5 8h4" stroke="#999"/></svg>
<div style="position:absolute;left:563px;top:398px;width:1px;height:170px;background:#e8e8e8;"></div>
<div style="position:absolute;left:563px;top:653px;width:1px;height:136px;background:#e8e8e8;"></div>
<svg style="position:absolute;left:840px;top:164px;" width="10" height="18" viewBox="0 0 10 18"><path d="M1 1h3M6 1h3M5 1v16M1 17h3M6 17h3" stroke="#000" stroke-width="1.2"/></svg>
<svg style="position:absolute;left:29px;top:1011px;" width="14" height="16" viewBox="0 0 14 16"><path d="M1 1L12 8L1 15z" fill="#3aa844"/><circle cx="11" cy="13" r="2.3" fill="#5a5a5a"/></svg>
<svg style="position:absolute;left:99px;top:1010px;" width="14" height="16" viewBox="0 0 14 16"><circle cx="4" cy="4" r="3.5" fill="#fff" stroke="#666" stroke-width="0.9"/><path d="M2.5 3.3h3M2.5 4.8h3" stroke="#666" stroke-width="0.7"/><rect x="4.5" y="6" width="8" height="5" fill="#e5a657"/><rect x="5" y="11" width="7" height="4" fill="#5a9ad6"/><rect x="4.5" y="5" width="8" height="2" fill="#7a7a7a"/></svg>
<svg style="position:absolute;left:169px;top:1010px;" width="13" height="14" viewBox="0 0 13 14"><g transform="scale(0.85)"><path d="M3.5 6a4 4 0 0 1 8 0z" fill="#86bd3a"/><rect x="3.5" y="7" width="8" height="6" rx="1" fill="#86bd3a"/><rect x="0.5" y="7" width="2" height="5" rx="1" fill="#86bd3a"/><rect x="12.5" y="7" width="2" height="5" rx="1" fill="#86bd3a"/><rect x="5" y="12" width="2" height="3.5" rx="1" fill="#86bd3a"/><rect x="8" y="12" width="2" height="3.5" rx="1" fill="#86bd3a"/><circle cx="6" cy="4.5" r=".7" fill="#fff"/><circle cx="9" cy="4.5" r=".7" fill="#fff"/></g></svg>
<svg style="position:absolute;left:310px;top:1011px;" width="13" height="13" viewBox="0 0 13 13"><rect x="0.5" y="0.5" width="12" height="12" fill="#f5d7a8" stroke="#e0a050"/><path d="M3 4h7M3 6.5h7M3 9h7" stroke="#d08a30" stroke-width="1"/></svg>
<svg style="position:absolute;left:411px;top:1011px;" width="12" height="12" viewBox="0 0 12 12"><rect x="0.5" y="0.5" width="11" height="11" fill="#d8d8d8" stroke="#7a7a7a"/><rect x="2" y="2" width="8" height="8" fill="#c0c0c0"/></svg>
<svg style="position:absolute;left:1700px;top:1011px;" width="14" height="12" viewBox="0 0 14 12"><path d="M0.5 0.5h13v8h-8l-3 3v-3H.5z" fill="#c8c8c8"/></svg>
<svg style="position:absolute;left:1791px;top:1010px;" width="13" height="13" viewBox="0 0 13 13"><rect x="0.5" y="0.5" width="12" height="12" fill="#fff" stroke="#5a8fc8"/><rect x="0.5" y="0.5" width="12" height="2.5" fill="#5a8fc8"/><path d="M3 5.5h6M3 7.5h6M3 9.5h4" stroke="#5a8fc8"/></svg>
<svg style="position:absolute;left:9px;top:1032px;" width="15" height="15" viewBox="0 0 15 15"><rect x="0.5" y="0.5" width="13" height="12" fill="#d0d0d0" stroke="#707070"/><rect x="0.5" y="13.5" width="14" height="1" fill="#707070"/></svg>
<svg style="position:absolute;left:1667px;top:1035px;" width="6" height="9" viewBox="0 0 6 9"><path d="M0.5 3.5L3 0.5 5.5 3.5zM0.5 5.5L3 8.5 5.5 5.5z" fill="#333"/></svg>
<svg style="position:absolute;left:1716px;top:1035px;" width="6" height="9" viewBox="0 0 6 9"><path d="M0.5 3.5L3 0.5 5.5 3.5zM0.5 5.5L3 8.5 5.5 5.5z" fill="#333"/></svg>
<svg style="position:absolute;left:1876px;top:1034px;" width="10" height="11" viewBox="0 0 10 11"><path d="M2 5V3a2.5 2.5 0 0 1 5 0" stroke="#8a8a8a" stroke-width="1.1" fill="none"/><rect x="3" y="5.5" width="6" height="5" fill="#9a9a9a"/></svg>
<svg style="position:absolute;left:1898px;top:1032px;" width="15" height="16" viewBox="0 0 15 16"><circle cx="7.5" cy="6" r="5" fill="none" stroke="#7a7a7a" stroke-width="1.2"/><rect x="3" y="10" width="9" height="5" fill="none" stroke="#7a7a7a" stroke-width="1.2"/><circle cx="5.5" cy="6" r="1" fill="#7a7a7a"/><circle cx="9.5" cy="6" r="1" fill="#7a7a7a"/></svg>
<svg style="position:absolute;left:10px;top:1057px;" width="17" height="17" viewBox="0 0 17 17"><path d="M0 2.3L7 1.3V8H0zM8 1.1L17 0V8H8zM0 9h7v6.7L0 14.7zM8 9h9v8L8 15.9z" fill="#fff"/></svg>
<svg style="position:absolute;left:46px;top:1057px;" width="17" height="17" viewBox="0 0 17 17"><circle cx="8.5" cy="8.5" r="7" fill="none" stroke="#fff" stroke-width="2"/></svg>
<svg style="position:absolute;left:82px;top:1057px;" width="17" height="17" viewBox="0 0 17 17"><path d="M1 2h10M1 15h10M1 6.5h10v4H1z" stroke="#fff" stroke-width="1.3" fill="none"/><path d="M2 2v13M10 2v13M14.5 1v15" stroke="#fff" stroke-width="1.3"/><rect x="13.5" y="6" width="2.5" height="3" fill="#fff"/></svg>
<svg style="position:absolute;left:120px;top:1056px;" width="18" height="18" viewBox="0 0 18 18"><path d="M16.5 10H4.5C4.8 14 10 15.5 15.5 13v3.5C8 19 1.5 15.5 1.5 9 1.5 3.5 6 0.5 10 0.5c4.5 0 7 3 6.5 9.5zM4.8 7h7.5C12 4 8 3.5 4.8 7z" fill="#1e7bd8"/></svg>
<svg style="position:absolute;left:157px;top:1057px;" width="18" height="16" viewBox="0 0 18 16"><path d="M1 2h6l2 2h8v11H1z" fill="#f0c348"/><rect x="1" y="6" width="16" height="9" fill="#f5d778"/><rect x="5" y="9" width="8" height="4" fill="#3b8ad8"/></svg>
<svg style="position:absolute;left:195px;top:1056px;" width="17" height="18" viewBox="0 0 17 18"><path d="M5 5V3.5a3.5 3.5 0 0 1 7 0V5" stroke="#fff" stroke-width="1.3" fill="none"/><rect x="1" y="5" width="15" height="12" fill="#fff"/><rect x="4" y="8" width="4" height="3" fill="#f25022"/><rect x="9" y="8" width="4" height="3" fill="#7fba00"/><rect x="4" y="12" width="4" height="3" fill="#00a4ef"/><rect x="9" y="12" width="4" height="3" fill="#ffb900"/></svg>
<svg style="position:absolute;left:232px;top:1058px;" width="17" height="13" viewBox="0 0 17 13"><path d="M0.5 4.5L8.5 0.5l8 4v8H.5z" fill="#fff"/><path d="M0.5 4.5l8 5 8-5" stroke="#101010" stroke-width="1.2" fill="none"/></svg>
<svg style="position:absolute;left:270px;top:1057px;" width="14" height="14" viewBox="0 0 14 14"><path d="M0 0h14v9l-5 5H0z" fill="#fff"/><path d="M9 14V9h5" fill="#101010"/></svg>
<div style="position:absolute;left:296px;top:1050px;width:36px;height:30px;background:#303030;"></div>
<svg style="position:absolute;left:305px;top:1057px;" width="18" height="13" viewBox="0 0 18 13"><path d="M1 12a8 8 0 0 1 16 0z" fill="#86bd3a"/><circle cx="6" cy="8" r="1.2" fill="#3a3a3a"/><circle cx="12" cy="8" r="1.2" fill="#3a3a3a"/><path d="M3 2l2 3M15 2l-2 3" stroke="#86bd3a" stroke-width="1.2"/></svg>
<div style="position:absolute;left:115px;top:1078px;width:28px;height:2px;background:#f0e6b0;"></div>
<div style="position:absolute;left:263px;top:1078px;width:28px;height:2px;background:#f0e6b0;"></div>
<div style="position:absolute;left:296px;top:1078px;width:36px;height:2px;background:#f0e6b0;"></div>
<svg style="position:absolute;left:1703px;top:1060px;" width="14" height="9" viewBox="0 0 14 9"><path d="M1 8l6-6 6 6" stroke="#fff" stroke-width="1.4" fill="none"/></svg>
<svg style="position:absolute;left:1728px;top:1058px;" width="15" height="14" viewBox="0 0 15 14"><path d="M1 13a12 12 0 0 1 13-12M3.5 13a9 9 0 0 1 10-9.5M6 13a6 6 0 0 1 7.5-6M8.5 13a3 3 0 0 1 5-2.5" stroke="#fff" stroke-width="1.1" fill="none"/></svg>
<svg style="position:absolute;left:1750px;top:1057px;" width="17" height="16" viewBox="0 0 17 16"><path d="M1 5h3l4-4v14l-4-4H1z" fill="none" stroke="#fff" stroke-width="1.2"/><path d="M10.5 5a4 4 0 0 1 0 6M13 3a7 7 0 0 1 0 10" stroke="#fff" stroke-width="1.2" fill="none"/></svg>
<svg style="position:absolute;left:1878px;top:1056px;" width="17" height="18" viewBox="0 0 17 18"><path d="M0.5 0.5h16v13H11l-2.5 3-2.5-3H.5z" fill="#fff"/><path d="M3 4h11M3 7h11M3 10h8" stroke="#101010" stroke-width="1.2"/></svg>
<div style="position:absolute;left:1915px;top:1050px;width:1px;height:30px;background:#606060;"></div>
<pre id="code" style="position:absolute;left:533px;top:128px;font:400 11.67px/17px 'Liberation Mono', monospace;color:#000;"><b class="k">package</b> com.example.abifirmandhani.inwepo;

<b class="k">import</b> <span class="fold">...</span>

<b class="k">public</b> <b class="k">class</b> <span class="sp">Hapus</span>Activity <b class="k">extends</b> AppCompatActivity {

    <i class="c">//<span class="sp">instansiasi</span> database <span class="sp">firebase</span></i>
    FirebaseDatabase <b class="f">database</b> ;
    DatabaseReference <b class="f">myRef</b>;

    EditText <b class="f">text4</b>;



    <span class="a">@Override</span>
    <b class="k">protected</b> <b class="k">void</b> onCreate(Bundle savedInstanceState) {
        <b class="k">super</b>.onCreate(savedInstanceState);
        setContentView(R.layout.<b class="sf">hapus_activity</b>);

        <b class="f">database</b> = FirebaseDatabase.<i>getInstance</i>();


        <b class="f">text4</b> = (EditText) findViewById(R.id.<b class="sf">edit4</b>);



    }


    <i class="c">//<span class="sp">Hapus</span> user</i>
    <b class="k">public</b> <b class="k">void</b> <span class="hl">Click2</span><span class="br">(</span>View view<span class="br">)</span>{

        <i class="c">//<span class="sp">inisiasi</span> database reference</i>
        <b class="f">myRef</b> = <b class="f">database</b>.getReference(<b class="s">"User"</b>).child(<b class="f">text4</b>.getText().toString());

        <i class="c">//<span class="sp">hapus</span> data</i>
        <b class="f">myRef</b>.removeValue();


    }
}</pre>
<div style="position:absolute;left:686px;top:636px;width:2px;height:17px;background:#000"></div>
<div id="t0" style="position:absolute;left:23.25px;top:4.84px;font:400 12px/15px 'Liberation Sans', sans-serif;color:#000;white-space:nowrap;transform-origin:0 0;transform:scaleX(1.0268);">Inwepo - [C:\Users\abifirmandhani\AndroidStudioProjects\Inwepo] - [app] - ...\app\src\main\java\com\example\abifirmandhani\inwepo\HapusActivity.java - Android Studio 2.2.1</div>
<div id="t1" style="position:absolute;left:5.75px;top:27.34px;font:400 12px/15px 'Liberation Sans', sans-serif;color:#000;white-space:nowrap;transform-origin:0 0;transform:scaleX(0.9814);"><u>F</u>ile</div>
<div id="t2" style="position:absolute;left:36.50px;top:27.34px;font:400 12px/15px 'Liberation Sans', sans-serif;color:#000;white-space:nowrap;transform-origin:0 0;transform:scaleX(1.0143);"><u>E</u>dit</div>
<div id="t3" style="position:absolute;left:69.50px;top:27.34px;font:400 12px/15px 'Liberation Sans', sans-serif;color:#000;white-space:nowrap;transform-origin:0 0;transform:scaleX(1.0073);"><u>V</u>iew</div>
<div id="t4" style="position:absolute;left:106.50px;top:27.34px;font:400 12px/15px 'Liberation Sans', sans-serif;color:#000;white-space:nowrap;transform-origin:0 0;transform:scaleX(1.0185);"><u>N</u>avigate</div>
<div id="t5" style="position:absolute;left:165.75px;top:27.34px;font:400 12px/15px 'Liberation Sans', sans-serif;color:#000;white-space:nowrap;transform-origin:0 0;transform:scaleX(1.0103);"><u>C</u>ode</div>
<div id="t6" style="position:absolute;left:207.00px;top:27.34px;font:400 12px/15px 'Liberation Sans', sans-serif;color:#000;white-space:nowrap;transform-origin:0 0;transform:scaleX(0.9773);">Analy<u>z</u>e</div>
<div id="t7" style="position:absolute;left:259.50px;top:27.34px;font:400 12px/15px 'Liberation Sans', sans-serif;color:#000;white-space:nowrap;transform-origin:0 0;transform:scaleX(0.9866);"><u>R</u>efactor</div>
<div id="t8" style="position:absolute;left:316.50px;top:27.34px;font:400 12px/15px 'Liberation Sans', sans-serif;color:#000;white-space:nowrap;transform-origin:0 0;transform:scaleX(1.0392);"><u>B</u>uild</div>
<div id="t9" style="position:absolute;left:355.75px;top:27.34px;font:400 12px/15px 'Liberation Sans', sans-serif;color:#000;white-space:nowrap;transform-origin:0 0;transform:scaleX(0.9752);">R<u>u</u>n</div>
<div id="t10" style="position:absolute;left:388.25px;top:27.34px;font:400 12px/15px 'Liberation Sans', sans-serif;color:#000;white-space:nowrap;transform-origin:0 0;transform:scaleX(1.0798);"><u>T</u>ools</div>
<div id="t11" style="position:absolute;left:429.50px;top:27.34px;font:400 12px/15px 'Liberation Sans', sans-serif;color:#000;white-space:nowrap;transform-origin:0 0;transform:scaleX(0.9013);">VC<u>S</u></div>
<div id="t12" style="position:absolute;left:462.00px;top:27.34px;font:400 12px/15px 'Liberation Sans', sans-serif;color:#000;white-space:nowrap;transform-origin:0 0;transform:scaleX(1.0600);"><u>W</u>indow</div>
<div id="t13" style="position:absolute;left:519.50px;top:27.34px;font:400 12px/15px 'Liberation Sans', sans-serif;color:#000;white-space:nowrap;transform-origin:0 0;transform:scaleX(1.0329);"><u>H</u>elp</div>
<div id="t14" style="position:absolute;left:28.25px;top:80.84px;font:700 12px/15px 'Liberation Sans', sans-serif;color:#000;white-space:nowrap;transform-origin:0 0;transform:scaleX(1.0219);">Inwepo</div>
<div id="t15" style="position:absolute;left:102.00px;top:80.84px;font:700 12px/15px 'Liberation Sans', sans-serif;color:#000;white-space:nowrap;transform-origin:0 0;transform:scaleX(0.9605);">app</div>
<div id="t16" style="position:absolute;left:153.25px;top:80.84px;font:400 12px/15px 'Liberation Sans', sans-serif;color:#000;white-space:nowrap;transform-origin:0 0;transform:scaleX(0.9531);">src</div>
<div id="t17" style="position:absolute;left:200.50px;top:80.84px;font:400 12px/15px 'Liberation Sans', sans-serif;color:#000;white-space:nowrap;transform-origin:0 0;transform:scaleX(1.0571);">main</div>
<div id="t18" style="position:absolute;left:259.50px;top:80.84px;font:400 12px/15px 'Liberation Sans', sans-serif;color:#000;white-space:nowrap;transform-origin:0 0;transform:scaleX(0.9766);">java</div>
<div id="t19" style="position:absolute;left:313.25px;top:80.84px;font:400 12px/15px 'Liberation Sans', sans-serif;color:#000;white-space:nowrap;transform-origin:0 0;transform:scaleX(1.0255);">com</div>
<div id="t20" style="position:absolute;left:369.00px;top:80.84px;font:400 12px/15px 'Liberation Sans', sans-serif;color:#000;white-space:nowrap;transform-origin:0 0;transform:scaleX(0.9700);">example</div>
<div id="t21" style="position:absolute;left:444.70px;top:80.84px;font:400 12px/15px 'Liberation Sans', sans-serif;color:#000;white-space:nowrap;transform-origin:0 0;transform:scaleX(1.0315);">abifirmandhani</div>
<div id="t22" style="position:absolute;left:557.80px;top:80.84px;font:400 12px/15px 'Liberation Sans', sans-serif;color:#000;white-space:nowrap;transform-origin:0 0;transform:scaleX(1.0360);">inwepo</div>
<div id="t23" style="position:absolute;left:628.70px;top:80.84px;font:400 12px/15px 'Liberation Sans', sans-serif;color:#000;white-space:nowrap;transform-origin:0 0;transform:scaleX(1.0275);">HapusActivity</div>
<div id="t24" style="position:absolute;left:50.90px;top:103.64px;font:400 12px/15px 'Liberation Sans', sans-serif;color:#5a5a5a;white-space:nowrap;transform-origin:0 0;transform:scaleX(1.0175);">Android</div>
<div id="t25" style="position:absolute;left:517.50px;top:104.34px;font:400 12px/15px 'Liberation Sans', sans-serif;color:#000;white-space:nowrap;transform-origin:0 0;transform:scaleX(1.0125);">activity_main.xml</div>
<div id="t26" style="position:absolute;left:660.00px;top:104.34px;font:400 12px/15px 'Liberation Sans', sans-serif;color:#000;white-space:nowrap;transform-origin:0 0;transform:scaleX(1.0087);">HapusActivity.java</div>
<div id="t27" style="position:absolute;left:807.50px;top:104.34px;font:400 12px/15px 'Liberation Sans', sans-serif;color:#000;white-space:nowrap;transform-origin:0 0;transform:scaleX(0.9984);">hapus_activity.xml</div>
<div id="t28" style="position:absolute;left:954.50px;top:104.34px;font:400 12px/15px 'Liberation Sans', sans-serif;color:#000;white-space:nowrap;transform-origin:0 0;transform:scaleX(1.0341);">MainActivity.java</div>
<div id="t29" style="position:absolute;left:62.50px;top:126.34px;font:700 12px/15px 'Liberation Sans', sans-serif;color:#000;white-space:nowrap;transform-origin:0 0;transform:scaleX(0.9839);">app</div>
<div id="t30" style="position:absolute;left:83.10px;top:146.34px;font:400 12px/15px 'Liberation Sans', sans-serif;color:#000;white-space:nowrap;transform-origin:0 0;transform:scaleX(1.0008);">manifests</div>
<div id="t31" style="position:absolute;left:102.90px;top:166.34px;font:400 12px/15px 'Liberation Sans', sans-serif;color:#000;white-space:nowrap;transform-origin:0 0;transform:scaleX(1.0228);">AndroidManifest.xml</div>
<div id="t32" style="position:absolute;left:82.50px;top:186.34px;font:400 12px/15px 'Liberation Sans', sans-serif;color:#000;white-space:nowrap;transform-origin:0 0;transform:scaleX(0.9766);">java</div>
<div id="t33" style="position:absolute;left:102.50px;top:206.34px;font:400 12px/15px 'Liberation Sans', sans-serif;color:#000;white-space:nowrap;transform-origin:0 0;transform:scaleX(1.0165);">com.example.abifirmandhani.inwepo</div>
<div id="t34" style="position:absolute;left:138.50px;top:226.34px;font:400 12px/15px 'Liberation Sans', sans-serif;color:#000;white-space:nowrap;transform-origin:0 0;transform:scaleX(1.0247);">HapusActivity</div>
<div id="t35" style="position:absolute;left:138.50px;top:246.34px;font:400 12px/15px 'Liberation Sans', sans-serif;color:#000;white-space:nowrap;transform-origin:0 0;transform:scaleX(1.0622);">MainActivity</div>
<div id="t36" style="position:absolute;left:102.50px;top:266.34px;font:400 12px/15px 'Liberation Sans', sans-serif;color:#000;white-space:nowrap;transform-origin:0 0;transform:scaleX(1.0165);">com.example.abifirmandhani.inwepo</div>
<div id="t37" style="position:absolute;left:102.50px;top:286.34px;font:400 12px/15px 'Liberation Sans', sans-serif;color:#000;white-space:nowrap;transform-origin:0 0;transform:scaleX(1.0165);">com.example.abifirmandhani.inwepo</div>
<div id="t38" style="position:absolute;left:82.50px;top:306.34px;font:400 12px/15px 'Liberation Sans', sans-serif;color:#000;white-space:nowrap;transform-origin:0 0;transform:scaleX(0.9597);">res</div>
<div id="t39" style="position:absolute;left:102.50px;top:326.34px;font:400 12px/15px 'Liberation Sans', sans-serif;color:#000;white-space:nowrap;transform-origin:0 0;transform:scaleX(1.0061);">drawable</div>
<div id="t40" style="position:absolute;left:102.50px;top:346.34px;font:400 12px/15px 'Liberation Sans', sans-serif;color:#000;white-space:nowrap;transform-origin:0 0;transform:scaleX(1.0552);">layout</div>
<div id="t41" style="position:absolute;left:122.50px;top:366.34px;font:400 12px/15px 'Liberation Sans', sans-serif;color:#000;white-space:nowrap;transform-origin:0 0;transform:scaleX(1.0136);">activity_main.xml</div>
<div id="t42" style="position:absolute;left:122.50px;top:386.34px;font:400 12px/15px 'Liberation Sans', sans-serif;color:#000;white-space:nowrap;transform-origin:0 0;transform:scaleX(1.0066);">hapus_activity.xml</div>
<div id="t43" style="position:absolute;left:102.50px;top:406.34px;font:400 12px/15px 'Liberation Sans', sans-serif;color:#000;white-space:nowrap;transform-origin:0 0;transform:scaleX(1.0682);">mipmap</div>
<div id="t44" style="position:absolute;left:102.50px;top:426.34px;font:400 12px/15px 'Liberation Sans', sans-serif;color:#000;white-space:nowrap;transform-origin:0 0;transform:scaleX(0.9744);">values</div>
<div id="t45" style="position:absolute;left:63.00px;top:446.34px;font:400 12px/15px 'Liberation Sans', sans-serif;color:#000;white-space:nowrap;transform-origin:0 0;transform:scaleX(0.9496);">Gradle Scripts</div>
<div id="t46" style="position:absolute;left:302.50px;top:266.34px;font:400 12px/15px 'Liberation Sans', sans-serif;color:#8c8c8c;white-space:nowrap;transform-origin:0 0;transform:scaleX(1.0138);">(androidTest)</div>
<div id="t47" style="position:absolute;left:303.50px;top:286.34px;font:400 12px/15px 'Liberation Sans', sans-serif;color:#8c8c8c;white-space:nowrap;transform-origin:0 0;transform:scaleX(0.9509);">(test)</div>
<div id="t48" style="position:absolute;left:45.20px;top:1011.84px;font:400 12px/15px 'Liberation Sans', sans-serif;color:#000;white-space:nowrap;transform-origin:0 0;transform:scaleX(0.9696);"><u>4</u>: Run</div>
<div id="t49" style="position:absolute;left:115.20px;top:1011.84px;font:400 12px/15px 'Liberation Sans', sans-serif;color:#000;white-space:nowrap;transform-origin:0 0;transform:scaleX(0.9288);">TODO</div>
<div id="t50" style="position:absolute;left:185.20px;top:1011.84px;font:400 12px/15px 'Liberation Sans', sans-serif;color:#000;white-space:nowrap;transform-origin:0 0;transform:scaleX(1.0297);"><u>6</u>: Android Monitor</div>
<div id="t51" style="position:absolute;left:326.20px;top:1011.84px;font:400 12px/15px 'Liberation Sans', sans-serif;color:#000;white-space:nowrap;transform-origin:0 0;transform:scaleX(0.9155);"><u>0</u>: Messages</div>
<div id="t52" style="position:absolute;left:426.20px;top:1011.84px;font:400 12px/15px 'Liberation Sans', sans-serif;color:#000;white-space:nowrap;transform-origin:0 0;transform:scaleX(0.9766);">Terminal</div>
<div id="t53" style="position:absolute;left:1718.50px;top:1011.84px;font:400 12px/15px 'Liberation Sans', sans-serif;color:#000;white-space:nowrap;transform-origin:0 0;transform:scaleX(0.9251);">Event Log</div>
<div id="t54" style="position:absolute;left:1808.50px;top:1011.84px;font:400 12px/15px 'Liberation Sans', sans-serif;color:#000;white-space:nowrap;transform-origin:0 0;transform:scaleX(0.9473);">Gradle Console</div>
<div id="t55" style="position:absolute;left:31.20px;top:1032.84px;font:400 12px/15px 'Liberation Sans', sans-serif;color:#000;white-space:nowrap;transform-origin:0 0;transform:scaleX(0.9797);">Gradle build finished in 25s 462ms (11 minutes ago)</div>
<div id="t56" style="position:absolute;left:1601.20px;top:1032.84px;font:400 12px/15px 'Liberation Sans', sans-serif;color:#000;white-space:nowrap;transform-origin:0 0;transform:scaleX(0.9091);">37:23</div>
<div id="t57" style="position:absolute;left:1639.50px;top:1032.84px;font:400 12px/15px 'Liberation Sans', sans-serif;color:#000;white-space:nowrap;transform-origin:0 0;transform:scaleX(0.7976);">CRLF</div>
<div id="t58" style="position:absolute;left:1683.50px;top:1032.84px;font:400 12px/15px 'Liberation Sans', sans-serif;color:#000;white-space:nowrap;transform-origin:0 0;transform:scaleX(0.8824);">UTF-8</div>
<div id="t59" style="position:absolute;left:1731.20px;top:1032.84px;font:400 12px/15px 'Liberation Sans', sans-serif;color:#999;white-space:nowrap;transform-origin:0 0;transform:scaleX(0.9990);">Context: &lt;no context&gt;</div>
<div id="t60" style="position:absolute;left:1775.50px;top:1057.64px;font:400 12px/15px 'Liberation Sans', sans-serif;color:#fff;white-space:nowrap;transform-origin:0 0;transform:scaleX(0.9225);">ENG</div>
<div id="t61" style="position:absolute;left:1814.50px;top:1057.64px;font:400 12px/15px 'Liberation Sans', sans-serif;color:#fff;white-space:nowrap;transform-origin:0 0;transform:scaleX(0.9619);">4:03 PM</div>
<div id="appdd" style="position:absolute;left:382.80px;top:54.84px;font:400 12px/15px 'Liberation Sans', sans-serif;color:#000;white-space:nowrap;transform-origin:0 0;transform:scaleX(1.0084);">app</div>
<div id="v0" style="position:absolute;left:5.94px;top:155.00px;font:400 12px/15px 'Liberation Sans', sans-serif;color:#000;white-space:nowrap;transform-origin:0 0;transform:rotate(-90deg) scaleX(0.7850);"><u>1</u>: Project</div>
<div id="v1" style="position:absolute;left:5.94px;top:254.50px;font:400 12px/15px 'Liberation Sans', sans-serif;color:#000;white-space:nowrap;transform-origin:0 0;transform:rotate(-90deg) scaleX(0.8558);"><u>7</u>: Structure</div>
<div id="v2" style="position:absolute;left:5.94px;top:335.90px;font:400 12px/15px 'Liberation Sans', sans-serif;color:#000;white-space:nowrap;transform-origin:0 0;transform:rotate(-90deg) scaleX(0.8192);">Captures</div>
<div id="v3" style="position:absolute;left:5.94px;top:879.00px;font:400 12px/15px 'Liberation Sans', sans-serif;color:#000;white-space:nowrap;transform-origin:0 0;transform:rotate(-90deg) scaleX(0.8065);">Build Variants</div>
<div id="v4" style="position:absolute;left:5.94px;top:977.00px;font:400 12px/15px 'Liberation Sans', sans-serif;color:#000;white-space:nowrap;transform-origin:0 0;transform:rotate(-90deg) scaleX(0.7655);"><u>2</u>: Favorites</div>
<div id="v5" style="position:absolute;left:1915.16px;top:126.00px;font:400 12px/15px 'Liberation Sans', sans-serif;color:#000;white-space:nowrap;transform-origin:0 0;transform:rotate(90deg) scaleX(0.9853);">Gradle</div>
<div id="v6" style="position:absolute;left:1915.16px;top:916.00px;font:400 12px/15px 'Liberation Sans', sans-serif;color:#000;white-space:nowrap;transform-origin:0 0;transform:rotate(90deg) scaleX(1.0337);">Android Model</div>
</body></html>
